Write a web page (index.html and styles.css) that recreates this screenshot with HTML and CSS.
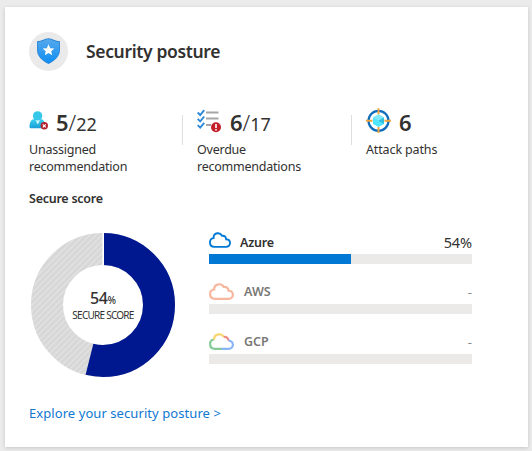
FILE: index.html
```html
<!DOCTYPE html>
<html lang="en">
<head>
<meta charset="utf-8">
<title>Security posture</title>
<link rel="stylesheet" href="styles.css">
</head>
<body>
<main class="card">
  <header class="header">
    <span class="badge">
      <svg width="23" height="26" viewBox="0 0 23 26">
        <defs><linearGradient id="shield" x2="0" y2="1"><stop offset="0" stop-color="#55a9ec"/><stop offset="1" stop-color="#0f8df2"/></linearGradient></defs>
        <path d="M0 3.200C5 3.200 7.500 .2 11.500 .2S18 3.200 23 3.200V12C23 19 16.500 23.500 11.500 26C6.500 23.500 0 19 0 12Z" fill="#2c86d6"/>
        <path d="M.8 4C5.500 4 7.700 1.200 11.500 1.200S17.500 4 22.200 4V12C22.200 18.500 16.500 22.800 11.500 25.300C6.500 22.800 .8 18.500 .8 12Z" fill="url(#shield)"/>
        <path d="M11.500 6.300L13.200 10.200L17.400 10.500L14.200 13.200L15.200 17.300L11.500 15.100L7.800 17.300L8.800 13.200L5.600 10.500L9.800 10.200Z" fill="#fff"/>
      </svg>
    </span>
    <h1 class="title">Security posture</h1>
  </header>

  <section class="stats">
    <div class="stat">
      <div class="figure">
        <svg class="icon" width="26" height="26" viewBox="0 0 26 26">
          <defs><linearGradient id="person" x2="0" y2="1"><stop offset="0" stop-color="#38d3f3"/><stop offset="1" stop-color="#1a9cd5"/></linearGradient></defs>
          <path d="M.5 19.800C.5 14.800 2.500 12 5.500 12H11.500C14.500 12 16 14.800 16.300 19.800Q16.300 21.300 14.800 21.300H2Q.5 21.300 .5 19.800Z" fill="url(#person)"/>
          <path d="M6 12H11.500L8.800 17.500Z" fill="#d9f6fd"/>
          <circle cx="8.600" cy="8.900" r="4.700" fill="#37c8e9"/>
          <circle cx="15.300" cy="18.800" r="3.700" fill="#b3202d"/>
          <path d="M13.800 17.300L16.800 20.300M16.800 17.300L13.800 20.300" stroke="#fff" stroke-width="1.200"/>
        </svg>
        <span class="value n5">5</span><span class="slash">/</span><span class="total">22</span>
      </div>
      <p class="label">Unassigned<br>recommendation</p>
    </div>
    <div class="stat second">
      <div class="figure">
        <svg class="icon" width="26" height="26" viewBox="0 0 26 26">
          <path d="M.7 5.500L3.200 8L7.200 3.200M.7 11.800L3.200 14.300L7.200 9.500M.7 18.200L3.200 20.700L7.200 15.900" fill="none" stroke="#2b88d8" stroke-width="1.900"/>
          <path d="M9 5.500H21.500M9 11.500H21.500M9 18H14" stroke="#a5a5a5" stroke-width="2.200"/>
          <circle cx="19" cy="20.300" r="5" fill="#c4202b"/>
          <path d="M19 16.900V21M19 22.100V23.600" stroke="#fff" stroke-width="1.600"/>
        </svg>
        <span class="value n6">6</span><span class="slash">/</span><span class="total">17</span>
      </div>
      <p class="label">Overdue<br>recommendations</p>
    </div>
    <div class="stat third">
      <div class="figure">
        <svg class="icon" width="26" height="26" viewBox="0 0 26 26">
          <circle cx="12.500" cy="13.800" r="10" fill="none" stroke="#0f6cbd" stroke-width="2.200"/>
          <path d="M12.500 1.300V7.500M12.500 20V26M0 13.800H6.500M18.500 13.800H25" stroke="#f2a33c" stroke-width="1.900"/>
          <path d="M12.500 7.600L18 10.600V17L12.500 20L7 17V10.600Z" fill="#50e6ff"/>
          <path d="M7 10.600L12.500 7.600L18 10.600L12.500 13.700Z" fill="#83e6f9"/>
          <path d="M12.500 13.700L18 10.600V17Z" fill="#32bedd"/>
        </svg>
        <span class="value n6">6</span>
      </div>
      <p class="label paths">Attack paths</p>
    </div>
  </section>

  <h2 class="subtitle">Secure score</h2>

  <section class="score">
    <div class="donut">
      <svg class="ring" width="144" height="144" viewBox="0 0 144 144">
        <defs>
          <pattern id="hatch" width="4.250" height="4.250" patternUnits="userSpaceOnUse" patternTransform="rotate(45)">
            <rect width="4.250" height="4.250" fill="#d7d7d7"/><rect width="1.200" height="4.250" fill="#e3e3e3"/>
          </pattern>
        </defs>
        <circle cx="72" cy="72" r="56" fill="none" stroke="url(#hatch)" stroke-width="32"/>
        <circle cx="72" cy="72" r="56" fill="none" stroke="#00188f" stroke-width="32" pathLength="100" stroke-dasharray="53.900 46.100" transform="rotate(-90 72 72)"/>
        <path d="M72.200 0V32" stroke="#fff" stroke-width="1.600"/>
      </svg>
      <div class="center">
        <div class="percent">54<small>%</small></div>
        <div class="caption">SECURE SCORE</div>
      </div>
    </div>
    <div class="bars">
      <div class="provider azure">
        <div class="line">
          <svg class="cloud" width="22" height="16" viewBox="0 0 25 17" preserveAspectRatio="none"><path d="M6 15.800H19.500C22 15.800 23.900 14 23.900 11.800C23.900 9.500 22 7.800 19.500 7.700C19.300 4.800 17.300 3.600 14.800 4C13.500 1.900 11.500 1 9.500 1.300C6.700 1.700 5 3.700 5.200 6.500C2.600 6.800 1.100 8.700 1.100 11C1.100 13.800 3 15.800 6 15.800Z" fill="none" stroke="#0078d4" stroke-width="2.100"/></svg>
          <span class="name">Azure</span><span class="pct">54%</span>
        </div>
        <div class="track"><div class="fill" style="width:54%"></div></div>
      </div>
      <div class="provider">
        <div class="line">
          <svg class="cloud" width="25" height="17" viewBox="0 0 25 17"><path d="M6 15.800H19.500C22 15.800 23.900 14 23.900 11.800C23.900 9.500 22 7.800 19.500 7.700C19.300 4.800 17.300 3.600 14.800 4C13.500 1.900 11.500 1 9.500 1.300C6.700 1.700 5 3.700 5.200 6.500C2.600 6.800 1.100 8.700 1.100 11C1.100 13.800 3 15.800 6 15.800Z" fill="none" stroke="#f7b79f" stroke-width="2.200"/></svg>
          <span class="name">AWS</span><span class="pct">-</span>
        </div>
        <div class="track"></div>
      </div>
      <div class="provider">
        <div class="line">
          <svg class="cloud" width="25" height="17" viewBox="0 0 25 17" fill="none" stroke-width="2.200">
            <path d="M13 15.800H6C3 15.800 1.100 13.800 1.100 11C1.100 8.700 2.600 6.800 5.200 6.500" stroke="#85ca98"/>
            <path d="M5.200 6.500C5 3.700 6.700 1.700 9.500 1.300C11.500 1 13.500 1.900 14.800 4" stroke="#fbd56d"/>
            <path d="M14.800 4C17.300 3.600 19.300 4.800 19.500 7.700" stroke="#ee8f87"/>
            <path d="M19.500 7.700C22 7.800 23.900 9.500 23.900 11.800C23.900 14 22 15.800 19.500 15.800H12.500" stroke="#8ab4f8"/>
          </svg>
          <span class="name">GCP</span><span class="pct">-</span>
        </div>
        <div class="track"></div>
      </div>
    </div>
  </section>

  <a class="link">Explore your security posture &gt;</a>
</main>
</body>
</html>
```

FILE: styles.css
```css
* { box-sizing: border-box; }
body {
  margin: 0;
  padding: 7px 4px 4px 5px;
  height: 451px;
  overflow: hidden;
  background: #ebebeb;
  color: #323130;
  font-family: "Noto Sans", "Open Sans", sans-serif;
}
.card {
  width: 523px;
  height: 440px;
  padding: 25px 24px 0;
  background: #fff;
  box-shadow: 0 1px 4px rgba(0, 0, 0, .16);
}
h1, h2, p { margin: 0; }
.header { display: flex; height: 39px; align-items: center; }
.badge {
  display: flex;
  align-items: center;
  justify-content: center;
  width: 39px;
  height: 39px;
  margin-right: 18px;
  border-radius: 50%;
  background: #eaeaea;
}
.badge svg { margin-top: -1px; }
.title { font-size: 17.500px; font-weight: 560; line-height: 38px; letter-spacing: -.35px; margin-top: -1px; }

.stats { display: flex; margin-top: 36px; height: 71px; }
.stat { width: 153px; }
.second, .third { display: flex; flex-direction: column; position: relative; padding-left: 15px; }
.second { width: 169px; }
.second::before, .third::before {
  content: "";
  position: absolute;
  left: 0;
  top: 8px;
  width: 1px;
  height: 30px;
  background: #dedede;
}
.figure { display: flex; height: 34px; align-items: baseline; line-height: 30px; }
.icon { flex: none; align-self: flex-start; }
.value { margin-left: 1px; font-size: 22px; font-weight: 600; }
.n6 { margin-left: 7px; }
.slash { font-size: 22px; font-weight: 300; }
.total { font-size: 18px; letter-spacing: -.1px; }
.label { font-size: 12.500px; line-height: 17px; letter-spacing: -.23px; white-space: nowrap; }
.paths { letter-spacing: -.13px; }

.subtitle { margin-top: 12px; font-size: 12.500px; font-weight: 600; line-height: 18px; letter-spacing: -.25px; }

.score { display: flex; margin-top: 25px; padding-left: 2px; height: 144px; }
.donut { display: grid; width: 144px; height: 144px; margin-right: 34px; }
.ring, .center { grid-area: 1 / 1; }
.center { align-self: center; text-align: center; padding-top: 1px; }
.percent { font-size: 16px; font-weight: 500; line-height: 18px; letter-spacing: -.5px; }
.percent small { font-size: 10px; letter-spacing: 0; }
.caption { font-size: 10px; line-height: 13px; letter-spacing: -.75px; }

.bars { width: 263px; margin-top: -3px; }
.provider { height: 50px; }
.line { display: flex; height: 24px; align-items: center; }
.cloud { flex: none; margin-top: -2px; }
.azure .cloud { margin-top: -4px; }
.name { margin-left: 10px; font-size: 12.500px; font-weight: 560; color: #797775; margin-top: -1px; }
.pct { margin-left: auto; font-size: 13px; color: #8a8886; margin-top: -1px; }
.azure .name, .azure .pct { color: #323130; margin-top: 0; }
.azure .name { margin-left: 9px; font-weight: 600; letter-spacing: -.2px; }
.azure .pct { font-size: 14.500px; letter-spacing: -.1px; }
.track { height: 10px; background: #ebeae9; }
.fill { height: 100%; background: #0078d4; }

.link { display: block; margin-top: 26px; color: #0f78d0; font-size: 13px; line-height: 20px; letter-spacing: .07px; }
```
